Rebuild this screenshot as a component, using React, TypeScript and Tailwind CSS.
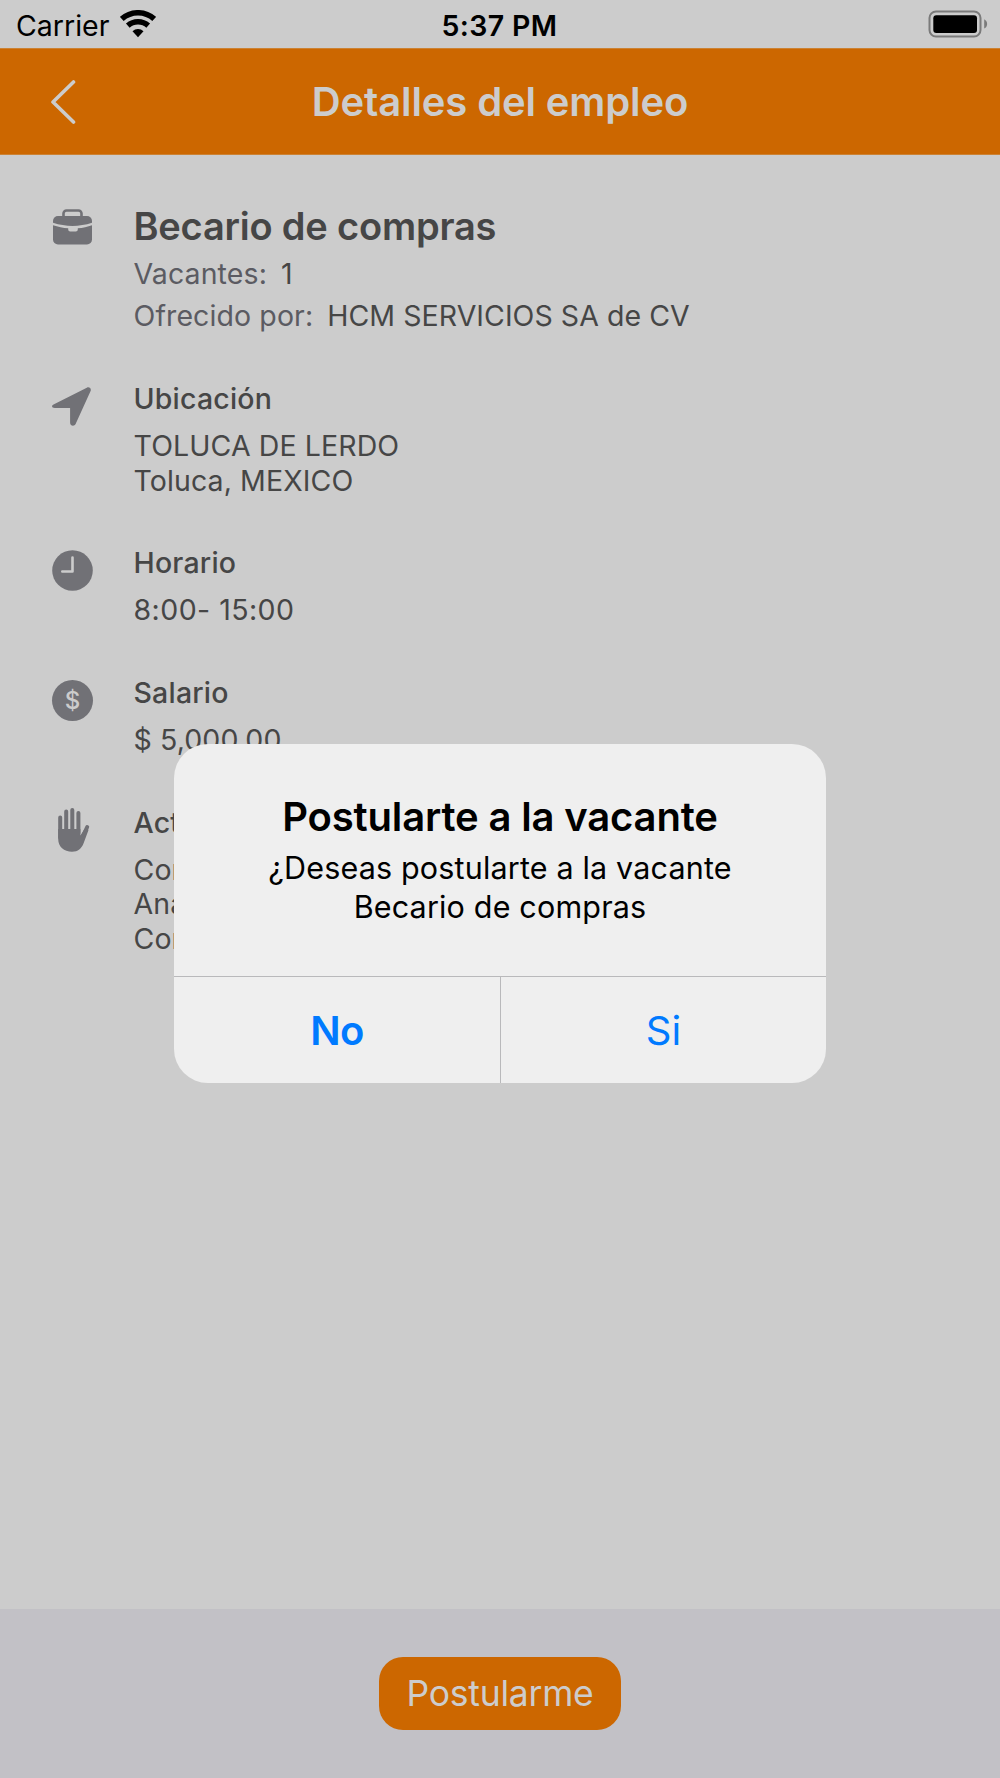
import React from 'react';

const ICON = '#717176';

function BriefcaseIcon() {
  return (
    <svg width="42" height="38" viewBox="0 0 42 38" className="block">
      <path d="M11.500 9V4.500a3 3 0 0 1 3-3h12a3 3 0 0 1 3 3V9" fill="none" stroke={ICON} strokeWidth="2.600" />
      <path d="M1 13.800V12a5 5 0 0 1 5-5h29a5 5 0 0 1 5 5v1.800C27 18 14 18 1 13.800Z" fill={ICON} />
      <path d="M1 16.200c5 1.600 10 2.700 15.200 3v1.300a2 2 0 0 0 2 2h5.600a2 2 0 0 0 2-2v-1.300c5-.3 10-1.400 14.200-3V30.500a5 5 0 0 1-5 5H6a5 5 0 0 1-5-5Z" fill={ICON} />
    </svg>
  );
}

function NavigateIcon() {
  return (
    <svg width="42" height="42" viewBox="0 0 42 42" className="block">
      <path
        d="M2 17.300 34.800.7c2.500-1.200 4.800.8 3.800 3.400L23.600 37c-1.300 2.700-5.500 2-5.500-1.300V20.900H2.800c-3.200 0-3.800-2.500-.8-3.600Z"
        fill={ICON}
      />
    </svg>
  );
}

function ClockIcon() {
  return (
    <svg width="42" height="42" viewBox="0 0 42 42" className="block">
      <circle cx="20.500" cy="20.500" r="20.300" fill={ICON} />
      <path d="M20.500 7.500v14H10.300" fill="none" stroke="#ccc" strokeWidth="2.600" strokeLinecap="round" strokeLinejoin="round" />
    </svg>
  );
}

function DollarIcon() {
  return (
    <span className="flex h-[41px] w-[41px] items-center justify-center rounded-full bg-[#717176] pt-px text-[24px] leading-none font-medium text-[#cccccc]">
      $
    </span>
  );
}

function HandIcon() {
  return (
    <svg width="42" height="46" viewBox="0 0 42 46" className="block">
      <g stroke={ICON} strokeWidth="4" strokeLinecap="round" fill="none">
        <path d="M8.200 10.500v20M14.200 4.500v20M20.300 3v20M26.400 6v20" />
        <path d="M35.200 20 29 33.500" />
      </g>
      <path d="M6.200 22h22.200v6.500l3.500-5.500 4.700-.3-5 13.500C29.500 41.500 26 44.700 20 44.700c-8 0-13.800-5-13.800-12.700Z" fill={ICON} />
    </svg>
  );
}

function WifiIcon() {
  return (
    <svg width="36" height="28" viewBox="0 0 36 28" className="block" fill="none" stroke="#000">
      <path d="M1.800 9a24.200 24.200 0 0 1 32.400 0" strokeWidth="5.600" />
      <path d="M7.800 15.600a15.300 15.300 0 0 1 20.400 0" strokeWidth="5.500" />
      <path d="M18 27.200 12.500 21.200a8.300 8.300 0 0 1 11 0Z" fill="#000" stroke="none" />
    </svg>
  );
}

function BatteryIcon() {
  return (
    <svg width="60" height="28" viewBox="0 0 60 28" className="block">
      <rect x="1.500" y="1.500" width="51" height="25" rx="6.500" fill="none" stroke="#7a7a7a" strokeWidth="2" />
      <rect x="5.300" y="5.300" width="43.700" height="17.700" rx="3" fill="#000" />
      <path d="M56.200 9.200c3.900 2 3.900 7.400 0 9.400Z" fill="#7a7a7a" />
    </svg>
  );
}

interface RowProps {
  icon: React.ReactNode;
  iconClass: string;
  children: React.ReactNode;
}

function Row({ icon, iconClass, children }: RowProps) {
  return (
    <div className="flex">
      <div className={`w-[81.500px] shrink-0 ${iconClass}`}>{icon}</div>
      <div className="text-[28.500px] tracking-[0.100px] whitespace-nowrap">{children}</div>
    </div>
  );
}

function Label({ children }: { children: React.ReactNode }) {
  return <h3 className="mb-[9px] leading-[42px] font-medium tracking-[0.200px]">{children}</h3>;
}

export default function App() {
  return (
    <div className="relative flex h-[1778px] w-[1000px] flex-col overflow-hidden bg-[#cccccc] font-['Inter',sans-serif] text-[#464646]">
      {/* Status bar */}
      <div className="flex h-12 items-center justify-between pr-[12px] pl-[16px] text-[28.500px] text-black">
        <div className="flex w-[300px] items-center gap-[11px]">
          <span className="pt-[4px]">Carrier</span>
          <WifiIcon />
        </div>
        <span className="pt-[4px] pr-[5px] font-semibold tracking-[0.350px]">5:37 PM</span>
        <div className="flex w-[300px] justify-end">
          <BatteryIcon />
        </div>
      </div>

      {/* Header */}
      <header className="flex h-[107px] items-center justify-between border-y border-[#cc8233] bg-[#cc6700] text-[#cccccc]">
        <button className="w-[150px] pl-[49px]">
          <svg width="27" height="46" viewBox="0 0 27 46" fill="none" className="block">
            <path d="M24.500 3 4 23l20.500 20" stroke="#ccc" strokeWidth="3.600" strokeLinecap="round" strokeLinejoin="round" />
          </svg>
        </button>
        <h1 className="text-[40px] font-semibold tracking-[-0.120px]">Detalles del empleo</h1>
        <div className="w-[150px]" />
      </header>

      {/* Job details */}
      <main className="flex-1 pt-[47px] pl-[52px]">
        <div className="mb-[41px]">
          <Row iconClass="pt-[7px]" icon={<BriefcaseIcon />}>
            <h2 className="mb-[3px] text-[38px] leading-[48px] font-semibold tracking-[-0.200px]">Becario de compras</h2>
            <p className="flex gap-[14px] leading-[42px]">
              <span className="text-[#5b5b62]">Vacantes:</span>
              <span>1</span>
            </p>
            <p className="flex gap-[14px] leading-[42px]">
              <span className="text-[#5b5b62]">Ofrecido por:</span>
              <span className="tracking-[0.050px]">HCM SERVICIOS SA de CV</span>
            </p>
          </Row>
        </div>
        <div className="flex flex-col gap-[44.300px]">
          <Row iconClass="pt-[9px]" icon={<NavigateIcon />}>
            <Label>Ubicación</Label>
            <p className="leading-[34.500px]">TOLUCA DE LERDO</p>
            <p className="leading-[34.500px]">Toluca, MEXICO</p>
          </Row>
          <Row iconClass="pt-[8px]" icon={<ClockIcon />}>
            <Label>Horario</Label>
            <p className="leading-[34.500px] tracking-[0.450px]">8:00- 15:00</p>
          </Row>
          <Row iconClass="pt-[8px]" icon={<DollarIcon />}>
            <Label>Salario</Label>
            <p className="leading-[34.500px]">$ 5,000.00</p>
          </Row>
          <Row iconClass="pt-[5px]" icon={<HandIcon />}>
            <Label>Act</Label>
            <p className="leading-[34.500px]">Con</p>
            <p className="leading-[34.500px]">Ana</p>
            <p className="leading-[34.500px]">Con</p>
          </Row>
        </div>
      </main>

      {/* Bottom bar */}
      <footer className="flex h-[169px] shrink-0 items-start justify-center bg-[#c2c1c6] pt-[48px]">
        <button className="h-[73px] w-[242px] rounded-[24px] bg-[#cc6700] pt-px text-[35.500px] tracking-[-0.250px] text-[#cccccc]">
          Postularme
        </button>
      </footer>

      {/* Alert */}
      <div className="absolute top-[744px] left-[174px] flex h-[339px] w-[652px] flex-col overflow-hidden rounded-[34px] bg-[#efefef] text-center text-black">
        <div className="flex-1 pt-[49px]">
          <h2 className="text-[40px] leading-[48px] font-semibold tracking-[-0.150px]">Postularte a la vacante</h2>
          <p className="mt-[7px] text-[30.500px] leading-[39px] tracking-[0.170px]">
            ¿Deseas postularte a la vacante
            <br />
            Becario de compras
          </p>
        </div>
        <div className="flex h-[107px] border-t border-[#b9b9bb] text-[40px] text-[#007aff]">
          <button className="w-[327px] border-r border-[#b9b9bb] pt-[2px] font-semibold tracking-[-0.500px]">No</button>
          <button className="flex-1 pt-[2px]">Si</button>
        </div>
      </div>
    </div>
  );
}
